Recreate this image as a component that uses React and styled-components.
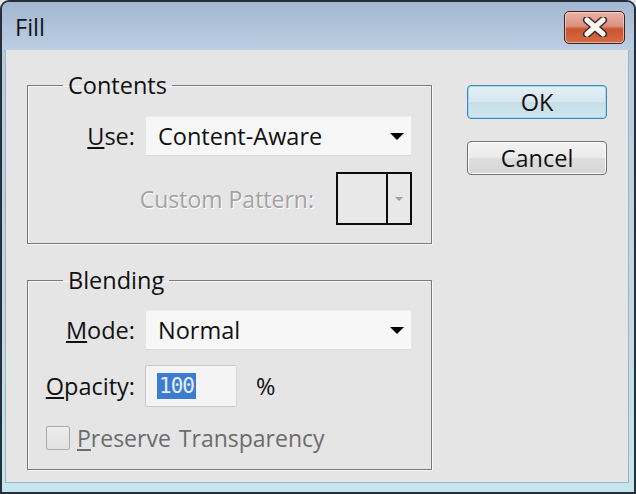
import React from "react";
import styled, { createGlobalStyle } from "styled-components";

const Global = createGlobalStyle`
  html, body { margin: 0; padding: 0; background: #e6e6e6; }
  body { font-family: "Open Sans", "Noto Sans", sans-serif; }
  * { box-sizing: border-box; }
`;

const Window = styled.div`
  width: 636px;
  height: 494px;
  border: 2px solid #26303a;
  border-radius: 9px 9px 0 0;
  background: linear-gradient(180deg, #a6bad3 0%, #b9cbdf 12%, #c2d6e6 60%, #c6e6ef 100%);
  display: flex;
  flex-direction: column;
  overflow: hidden;
`;

const TitleBar = styled.div`
  height: 48px;
  flex: none;
  display: flex;
  align-items: center;
  justify-content: space-between;
  padding: 0 9px 0 13px;
  background: linear-gradient(180deg, #a4b8d1 0%, #afc2d9 50%, #bccee2 100%);
`;

const Title = styled.span`
  font-size: 23.5px;
  color: #0e1620;
  margin-top: 2px;
`;

const CloseButton = styled.div`
  width: 61px;
  height: 33px;
  margin-top: 2px;
  border: 1px solid #3a2424;
  border-radius: 5px;
  background: linear-gradient(180deg, #e9b2a6 0%, #dc9280 45%, #c9552f 55%, #d56a45 100%);
  box-shadow: inset 0 0 0 1px rgba(255, 220, 210, 0.6);
  display: flex;
  align-items: center;
  justify-content: center;
`;

const Client = styled.div`
  flex: 1;
  margin: 0 5px 9px 3px;
  background: #e5e5e5;
  border: 1px solid #9fb3c6;
  border-top: none;
  display: flex;
  gap: 35px;
  padding: 21px 21px 0 21px;
`;

const LeftColumn = styled.div`
  width: 405px;
  display: flex;
  flex-direction: column;
  gap: 22px;
`;

const GroupBox = styled.fieldset`
  margin: 0;
  border: 1px solid #7a7a7a;
  box-shadow: 1px 1px 0 #f6f6f6, inset 1px 1px 0 #f6f6f6;
  padding: ${(p) => p.$pad};
  min-width: 0;
`;

const Legend = styled.legend`
  font-size: 23.5px;
  line-height: 28px;
  padding: 0 5px;
  margin-left: 35px;
  color: #111;
`;

const FormGrid = styled.div`
  display: grid;
  grid-template-columns: 107px 267px;
  column-gap: 10px;
  row-gap: ${(p) => p.$rowGap};
  align-items: center;
`;

const Label = styled.label`
  font-size: 23.5px;
  color: #111;
  text-align: right;
  white-space: nowrap;
`;

const SelectBox = styled.div`
  height: 40px;
  display: flex;
  align-items: center;
  justify-content: space-between;
  padding: 0 7px 0 12px;
  background: #f7f7f7;
  border: 1px solid #e6e6e6;
  border-top-color: #ececec;
  border-bottom-color: #d9d9d9;
  border-radius: 2px;
  font-size: 23.5px;
  color: #111;
`;

const PatternRow = styled.div`
  grid-column: 1 / -1;
  display: flex;
  align-items: center;
  justify-content: flex-end;
  gap: 22px;
`;

const DisabledText = styled.span`
  font-size: 23px;
  color: #a3a3a3;
  text-shadow: 1px 1px 0 #ffffff;
  white-space: nowrap;
`;

const PatternPicker = styled.div`
  width: 76px;
  height: 53px;
  border: 2px solid #0c0c0c;
  display: flex;
  background: #e8e8e8;
`;

const PatternSwatch = styled.div`
  flex: 1;
  border-right: 2px solid #0c0c0c;
`;

const PatternArrow = styled.div`
  width: 22px;
  display: flex;
  align-items: center;
  justify-content: center;
`;

const OpacityRow = styled.div`
  display: flex;
  align-items: center;
  gap: 19px;
`;

const NumberField = styled.div`
  width: 92px;
  height: 42px;
  background: #f4f4f4;
  border: 1px solid #c9c9c9;
  border-right-color: #d8d8d8;
  border-radius: 2px;
  display: flex;
  align-items: center;
  padding-left: 11px;
`;

const Selected = styled.span`
  background: #3d7ccf;
  color: #e4eefa;
  font-family: "DejaVu Sans Mono", monospace;
  font-size: 21px;
  line-height: 26px;
  padding: 0 2px;
  letter-spacing: -1px;
`;

const Unit = styled.span`
  font-size: 23.5px;
  color: #111;
`;

const CheckRow = styled.div`
  grid-column: 1 / -1;
  display: flex;
  align-items: center;
  gap: 7px;
  padding-left: 18px;
`;

const CheckBox = styled.div`
  width: 24px;
  height: 24px;
  border: 1px solid #ababab;
  border-radius: 2px;
  background: linear-gradient(180deg, #ececec, #e2e2e2);
`;

const CheckLabel = styled.span`
  font-size: 23px;
  color: #6c6c6c;
  word-spacing: 2px;
`;

const RightColumn = styled.div`
  width: 140px;
  display: flex;
  flex-direction: column;
  gap: 22px;
  padding-top: 14px;
`;

const Button = styled.div`
  height: 34px;
  display: flex;
  align-items: center;
  justify-content: center;
  font-size: 23.5px;
  color: #111;
  border-radius: 4px;
  border: 1px solid ${(p) => (p.$default ? "#3f86b4" : "#707070")};
  background: ${(p) =>
    p.$default
      ? "linear-gradient(180deg, #e3eff5 0%, #d6e7ef 50%, #c8dee8 51%, #cfe4ec 100%)"
      : "linear-gradient(180deg, #f2f2f2 0%, #ebebeb 50%, #dddddd 51%, #d6d6d6 100%)"};
  box-shadow: inset 0 0 0 1px ${(p) => (p.$default ? "#9fdcf2" : "#fbfbfb")};
`;

const ArrowDown = ({ w = 14, h = 7, color = "#000" }) => (
  <svg width={w} height={h} viewBox="0 0 14 7">
    <polygon points="0,0 14,0 7,7" fill={color} />
  </svg>
);

export default function App() {
  return (
    <>
      <Global />
      <Window>
        <TitleBar>
          <Title>Fill</Title>
          <CloseButton>
            <svg width="28" height="20" viewBox="0 0 28 20">
              <path d="M6 3 L22 17 M22 3 L6 17" stroke="#3a2a2a" strokeWidth="8" strokeLinecap="round" />
              <path d="M6 3 L22 17 M22 3 L6 17" stroke="#fbf6f4" strokeWidth="5" strokeLinecap="round" />
            </svg>
          </CloseButton>
        </TitleBar>
        <Client>
          <LeftColumn>
            <GroupBox $pad="17px 18px 18px 0">
              <Legend>Contents</Legend>
              <FormGrid $rowGap="16px">
                <Label>
                  <u>U</u>se:
                </Label>
                <SelectBox>
                  <span>Content-Aware</span>
                  <ArrowDown />
                </SelectBox>
                <PatternRow>
                  <DisabledText>Custom Pattern:</DisabledText>
                  <PatternPicker>
                    <PatternSwatch />
                    <PatternArrow>
                      <ArrowDown w={8} h={4} color="#a0a0a0" />
                    </PatternArrow>
                  </PatternPicker>
                </PatternRow>
              </FormGrid>
            </GroupBox>
            <GroupBox $pad="16px 18px 15px 0">
              <Legend>Blending</Legend>
              <FormGrid $rowGap="15px">
                <Label>
                  <u>M</u>ode:
                </Label>
                <SelectBox>
                  <span>Normal</span>
                  <ArrowDown />
                </SelectBox>
                <Label>
                  <u>O</u>pacity:
                </Label>
                <OpacityRow>
                  <NumberField>
                    <Selected>100</Selected>
                  </NumberField>
                  <Unit>%</Unit>
                </OpacityRow>
                <CheckRow>
                  <CheckBox />
                  <CheckLabel>
                    <u>P</u>reserve Transparency
                  </CheckLabel>
                </CheckRow>
              </FormGrid>
            </GroupBox>
          </LeftColumn>
          <RightColumn>
            <Button $default>OK</Button>
            <Button>Cancel</Button>
          </RightColumn>
        </Client>
      </Window>
    </>
  );
}
